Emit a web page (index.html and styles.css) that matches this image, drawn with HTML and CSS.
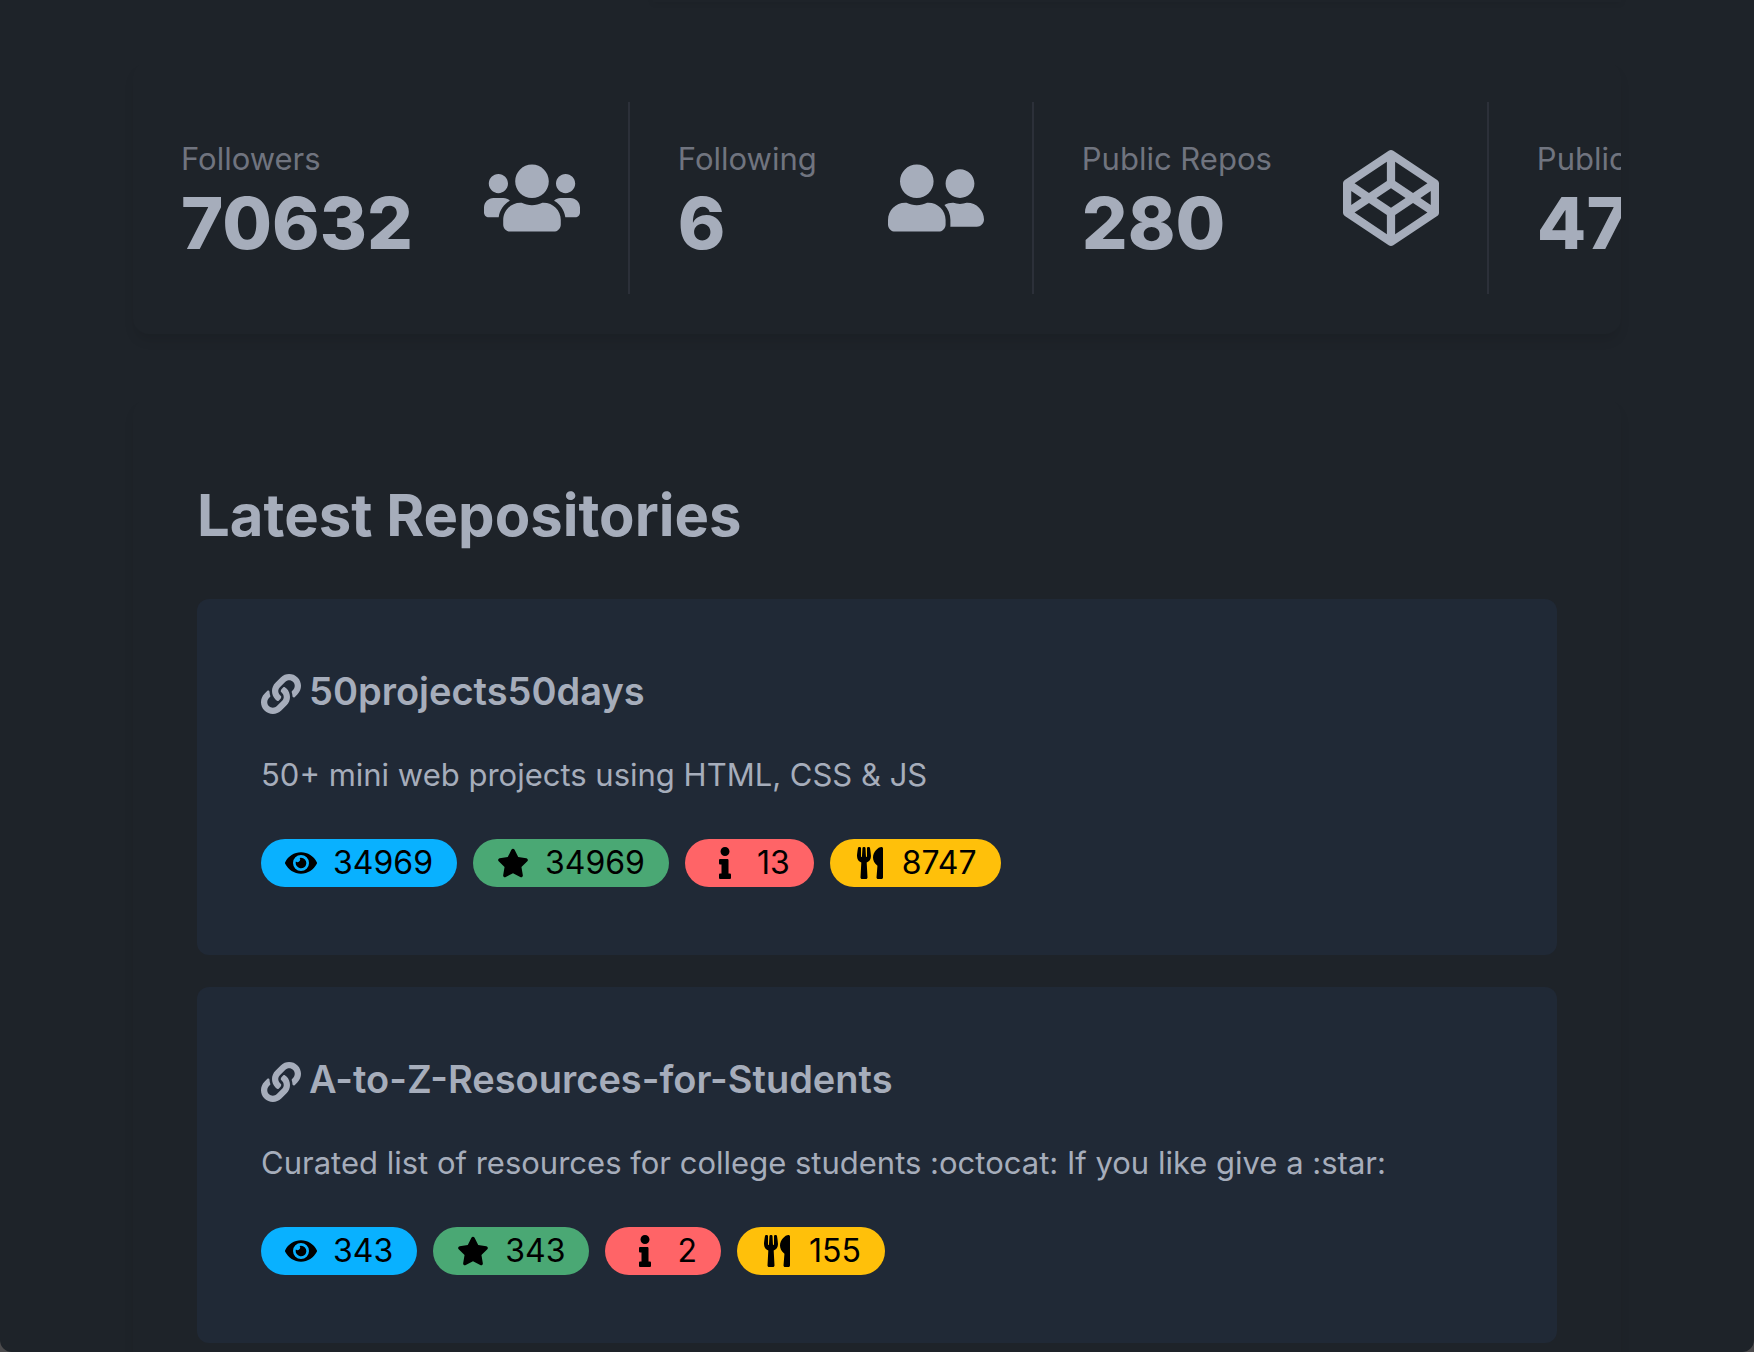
FILE: index.html
```html
<!DOCTYPE html>
<html lang="en">
<head>
<meta charset="utf-8">
<meta name="viewport" content="width=device-width, initial-scale=1">
<title>GitHub Finder</title>
<link rel="stylesheet" href="styles.css">
</head>
<body>
<svg class="sprite" aria-hidden="true">
  <symbol id="i-users" viewBox="0 0 640 512"><path d="M96 224c35.300 0 64-28.700 64-64s-28.700-64-64-64-64 28.700-64 64 28.700 64 64 64zm448 0c35.300 0 64-28.700 64-64s-28.700-64-64-64-64 28.700-64 64 28.700 64 64 64zm32 32h-64c-17.600 0-33.500 7.100-45.100 18.600 40.300 22.100 68.900 62 75.100 109.400h66c17.700 0 32-14.300 32-32v-32c0-35.300-28.700-64-64-64zm-256 0c61.900 0 112-50.100 112-112S381.900 32 320 32 208 82.100 208 144s50.100 112 112 112zm76.800 32h-8.300c-20.800 10-43.900 16-68.500 16s-47.600-6-68.500-16h-8.300C179.600 288 128 339.600 128 403.200V432c0 26.500 21.500 48 48 48h288c26.500 0 48-21.500 48-48v-28.800c0-63.600-51.600-115.200-115.200-115.200zm-223.700-13.400C161.500 263.100 145.600 256 128 256H64c-35.300 0-64 28.700-64 64v32c0 17.700 14.300 32 32 32h65.900c6.300-47.400 34.900-87.300 75.200-109.400z"/></symbol>
  <symbol id="i-friends" viewBox="0 0 640 512"><path d="M192 256c61.900 0 112-50.100 112-112S253.900 32 192 32 80 82.100 80 144s50.100 112 112 112zm76.800 32h-8.300c-20.800 10-43.900 16-68.500 16s-47.600-6-68.500-16h-8.300C51.600 288 0 339.600 0 403.200V432c0 26.500 21.500 48 48 48h288c26.500 0 48-21.500 48-48v-28.800c0-63.600-51.600-115.200-115.200-115.200zM480 256c53 0 96-43 96-96s-43-96-96-96-96 43-96 96 43 96 96 96zm48 32h-3.800c-13.900 4.800-28.600 8-44.200 8s-30.300-3.200-44.200-8H432c-20.400 0-39.200 5.900-55.700 15.400 24.400 26.300 39.700 61.200 39.700 99.800v38.400c0 2.200-.5 4.300-.6 6.400H592c26.500 0 48-21.500 48-48 0-61.900-50.100-112-112-112z"/></symbol>
  <symbol id="i-codepen" viewBox="0 0 512 512"><path d="M502.285 159.704l-234-156c-7.987-4.915-16.511-4.960-24.571 0l-234 156C3.714 163.703 0 170.847 0 177.989v155.999c0 7.143 3.714 14.286 9.715 18.286l234 156.022c7.987 4.915 16.511 4.960 24.571 0l234-156.022c6-3.999 9.715-11.143 9.715-18.286V177.989c-.001-7.142-3.715-14.286-9.716-18.285zM278 63.131l172.286 114.858-76.857 51.429L278 165.703V63.131zm-44 0v102.572l-95.429 63.715-76.857-51.429L234 63.131zM44 219.132l55.143 36.857L44 292.847v-73.715zm190 229.715L61.714 333.989l76.857-51.429L234 346.275v102.572zm22-140.858l-77.715-52 77.715-52 77.715 52-77.715 52zm22 140.858V346.275l95.429-63.715 76.857 51.429L278 448.847zm190-156l-55.143-36.857L468 219.132v73.715z"/></symbol>
  <symbol id="i-store" viewBox="0 0 512 512"><path d="M32 32h448v128H32zM64 192h384v288H64z"/></symbol>
  <symbol id="i-link" viewBox="0 0 512 512"><path d="M326.612 185.391c59.747 59.809 58.927 155.698.36 214.590-.11.120-.24.250-.36.370l-67.200 67.200c-59.270 59.270-155.699 59.262-214.960 0-59.270-59.260-59.270-155.700 0-214.960l37.106-37.106c9.840-9.840 26.786-3.300 27.294 10.606.648 17.722 3.826 35.527 9.690 52.721 1.986 5.822.567 12.262-3.783 16.612l-13.087 13.087c-28.026 28.026-28.905 73.660-1.155 101.960 28.024 28.579 74.086 28.749 102.325.510l67.200-67.190c28.191-28.191 28.073-73.757 0-101.830-3.701-3.694-7.429-6.564-10.341-8.569a16.037 16.037 0 0 1-6.947-12.606c-.396-10.567 3.348-21.456 11.698-29.806l21.054-21.055c5.521-5.521 14.182-6.199 20.584-1.731a152.482 152.482 0 0 1 20.522 17.197zM467.547 44.449c-59.261-59.262-155.690-59.270-214.960 0l-67.200 67.200c-.120.120-.250.250-.360.370-58.566 58.892-59.387 154.781.360 214.590a152.454 152.454 0 0 0 20.521 17.196c6.402 4.468 15.064 3.789 20.584-1.731l21.054-21.055c8.350-8.350 12.094-19.239 11.698-29.806a16.037 16.037 0 0 0-6.947-12.606c-2.912-2.005-6.640-4.875-10.341-8.569-28.073-28.073-28.191-73.639 0-101.830l67.200-67.190c28.239-28.239 74.300-28.069 102.325.510 27.750 28.300 26.872 73.934-1.155 101.960l-13.087 13.087c-4.350 4.350-5.769 10.790-3.783 16.612 5.864 17.194 9.042 34.999 9.690 52.721.509 13.906 17.454 20.446 27.294 10.606l37.106-37.106c59.271-59.259 59.271-155.699.001-214.959z"/></symbol>
  <symbol id="i-eye" viewBox="0 0 576 512"><path d="M572.520 241.400C518.290 135.590 410.930 64 288 64S57.680 135.640 3.480 241.410a32.350 32.350 0 0 0 0 29.190C57.710 376.410 165.070 448 288 448s230.320-71.640 284.520-177.410a32.350 32.350 0 0 0 0-29.190zM288 400a144 144 0 1 1 144-144 143.930 143.930 0 0 1-144 144zm0-240a95.310 95.310 0 0 0-25.310 3.790 47.850 47.850 0 0 1-66.900 66.900A95.780 95.780 0 1 0 288 160z"/></symbol>
  <symbol id="i-star" viewBox="0 0 576 512"><path d="M259.300 17.800L194 150.200 47.900 171.500c-26.200 3.800-36.700 36.100-17.700 54.600l105.700 103-25 145.500c-4.500 26.300 23.200 46 46.400 33.700L288 439.600l130.700 68.700c23.200 12.200 50.900-7.400 46.400-33.700l-25-145.500 105.700-103c19-18.500 8.500-50.800-17.700-54.600L382 150.200 316.700 17.800c-11.700-23.600-45.600-23.900-57.400 0z"/></symbol>
  <symbol id="i-info" viewBox="0 0 192 512"><path d="M20 424.229h20V279.771H20c-11.046 0-20-8.954-20-20V212c0-11.046 8.954-20 20-20h112c11.046 0 20 8.954 20 20v212.229h20c11.046 0 20 8.954 20 20V492c0 11.046-8.954 20-20 20H20c-11.046 0-20-8.954-20-20v-47.771c0-11.046 8.954-20 20-20zM96 0C56.235 0 24 32.235 24 72s32.235 72 72 72 72-32.235 72-72S135.764 0 96 0z"/></symbol>
  <symbol id="i-utensils" viewBox="0 0 416 512"><path d="M207.900 15.200c.8 4.700 16.100 94.500 16.100 128.800 0 52.300-27.800 89.600-68.900 104.600L168 486.700c.7 13.700-10.200 25.300-24 25.300H80c-13.700 0-24.700-11.500-24-25.300l12.900-238.100C27.700 233.600 0 196.200 0 144 0 109.600 15.300 19.900 16.100 15.200 19.300-5.100 61.400-5.400 64 16.300v141.200c1.300 3.400 15.100 3.200 16 0 1.400-25.300 7.900-139.200 8-141.800 3.300-20.800 44.700-20.800 47.900 0 .2 2.700 6.600 116.500 8 141.800.9 3.200 14.800 3.400 16 0V16.300c2.600-21.600 44.800-21.400 48-1.100zm119.200 285.700l-15 185.100c-1.200 14 9.900 26 23.900 26h56c13.300 0 24-10.700 24-24V24c0-13.200-10.700-24-24-24-82.500 0-221.400 178.500-64.900 300.900z"/></symbol>
</svg>
<main class="page">
  <div class="profile-edge"></div>
  <section class="stats" aria-label="Profile statistics">
    <div class="stat"><div class="stat-body"><div class="stat-title">Followers</div><div class="stat-value">70632</div></div><svg class="stat-icon"><use href="#i-users"/></svg></div>
    <div class="stat"><div class="stat-body"><div class="stat-title">Following</div><div class="stat-value">6</div></div><svg class="stat-icon"><use href="#i-friends"/></svg></div>
    <div class="stat"><div class="stat-body"><div class="stat-title">Public Repos</div><div class="stat-value">280</div></div><svg class="stat-icon"><use href="#i-codepen"/></svg></div>
    <div class="stat"><div class="stat-body"><div class="stat-title">Public Gists</div><div class="stat-value">47</div></div><svg class="stat-icon"><use href="#i-store"/></svg></div>
  </section>
  <section class="repos">
    <h2 class="repos-heading">Latest Repositories</h2>
    <article class="repo">
      <h3 class="repo-name"><a class="repo-link" href="#"><svg class="link-icon"><use href="#i-link"/></svg>50projects50days</a></h3>
      <p class="repo-text">50+ mini web projects using HTML, CSS &amp; JS</p>
      <div class="badges">
        <span class="badge badge-info"><svg class="badge-icon"><use href="#i-eye"/></svg>34969</span>
        <span class="badge badge-success"><svg class="badge-icon"><use href="#i-star"/></svg>34969</span>
        <span class="badge badge-error"><svg class="badge-icon"><use href="#i-info"/></svg>13</span>
        <span class="badge badge-warning"><svg class="badge-icon"><use href="#i-utensils"/></svg>8747</span>
      </div>
    </article>
    <article class="repo">
      <h3 class="repo-name"><a class="repo-link" href="#"><svg class="link-icon"><use href="#i-link"/></svg>A-to-Z-Resources-for-Students</a></h3>
      <p class="repo-text">Curated list of resources for college students :octocat: If you like give a :star:</p>
      <div class="badges">
        <span class="badge badge-info"><svg class="badge-icon"><use href="#i-eye"/></svg>343</span>
        <span class="badge badge-success"><svg class="badge-icon"><use href="#i-star"/></svg>343</span>
        <span class="badge badge-error"><svg class="badge-icon"><use href="#i-info"/></svg>2</span>
        <span class="badge badge-warning"><svg class="badge-icon"><use href="#i-utensils"/></svg>155</span>
      </div>
    </article>
  </section>
</main>
<div class="window-frame"></div>
</body>
</html>
```
FILE: styles.css
```css
* { box-sizing: border-box; }
body {
  margin: 0;
  background: #1e2329;
  color: #a6adbb;
  font-family: Inter, "Liberation Sans", sans-serif;
  font-size: 31px;
  line-height: 48px;
}
svg { fill: currentColor; flex: none; }
.sprite { display: none; }
.page { height: 100vh; padding: 0 133px; overflow: hidden; }

/* lower edge of the profile card */
.profile-edge {
  height: 2px;
  margin: 0 0 60px 520px;
  box-shadow: 0 0 6px rgba(0, 0, 0, .2);
}

.stats {
  display: flex;
  padding: 40px 0;
  overflow: hidden;
  border-radius: 16px;
  box-shadow: 0 8px 12px -2px rgba(0, 0, 0, .1);
}
.stat {
  display: flex;
  flex: none;
  align-items: center;
  gap: 71px;
  height: 192px;
  padding: 0 48px;
  border-right: 2px solid #2c3039;
}
.stat-body { padding-top: 2px; }
.stat-title { color: #70747f; }
.stat-value { font-size: 72px; font-weight: 800; line-height: 80px; }
.stat-icon { width: 96px; height: 96px; }

.repos {
  display: flex;
  flex-direction: column;
  gap: 32px;
  margin-top: 65px;
  padding: 80px 64px 64px;
  border-radius: 16px;
  box-shadow: 0 8px 12px -2px rgba(0, 0, 0, .1);
}
.repos-heading { margin: 0 0 16px; font-size: 58px; font-weight: 700; line-height: 72px; }
.repo {
  padding: 64px 64px 68px;
  border-radius: 12px;
  background: #202936;
}
.repo-name { margin: 0; font-size: 38px; font-weight: 600; line-height: 56px; }
.repo-link { display: flex; align-items: center; gap: 8px; color: inherit; text-decoration: none; }
.link-icon { width: 40px; height: 40px; margin-top: 6px; }
.repo-text { margin: 32px 0 40px; }
.badges { display: flex; gap: 16px; }
.badge {
  display: flex;
  align-items: center;
  gap: 16px;
  height: 48px;
  padding: 0 24px;
  border-radius: 24px;
  color: #000;
  font-size: 32px;
}
.badge-icon { width: 32px; height: 32px; }
.badge-info { background: #09b1ff; }
.badge-success { background: #4aa874; }
.badge-error { background: #ff6467; }
.badge-warning { background: #ffc00a; }

/* rounded lower corners of the window */
.window-frame {
  position: fixed;
  inset: 0;
  border-radius: 0 0 12px 12px;
  box-shadow: 0 0 0 8px #4b4a4c;
  pointer-events: none;
}
```
